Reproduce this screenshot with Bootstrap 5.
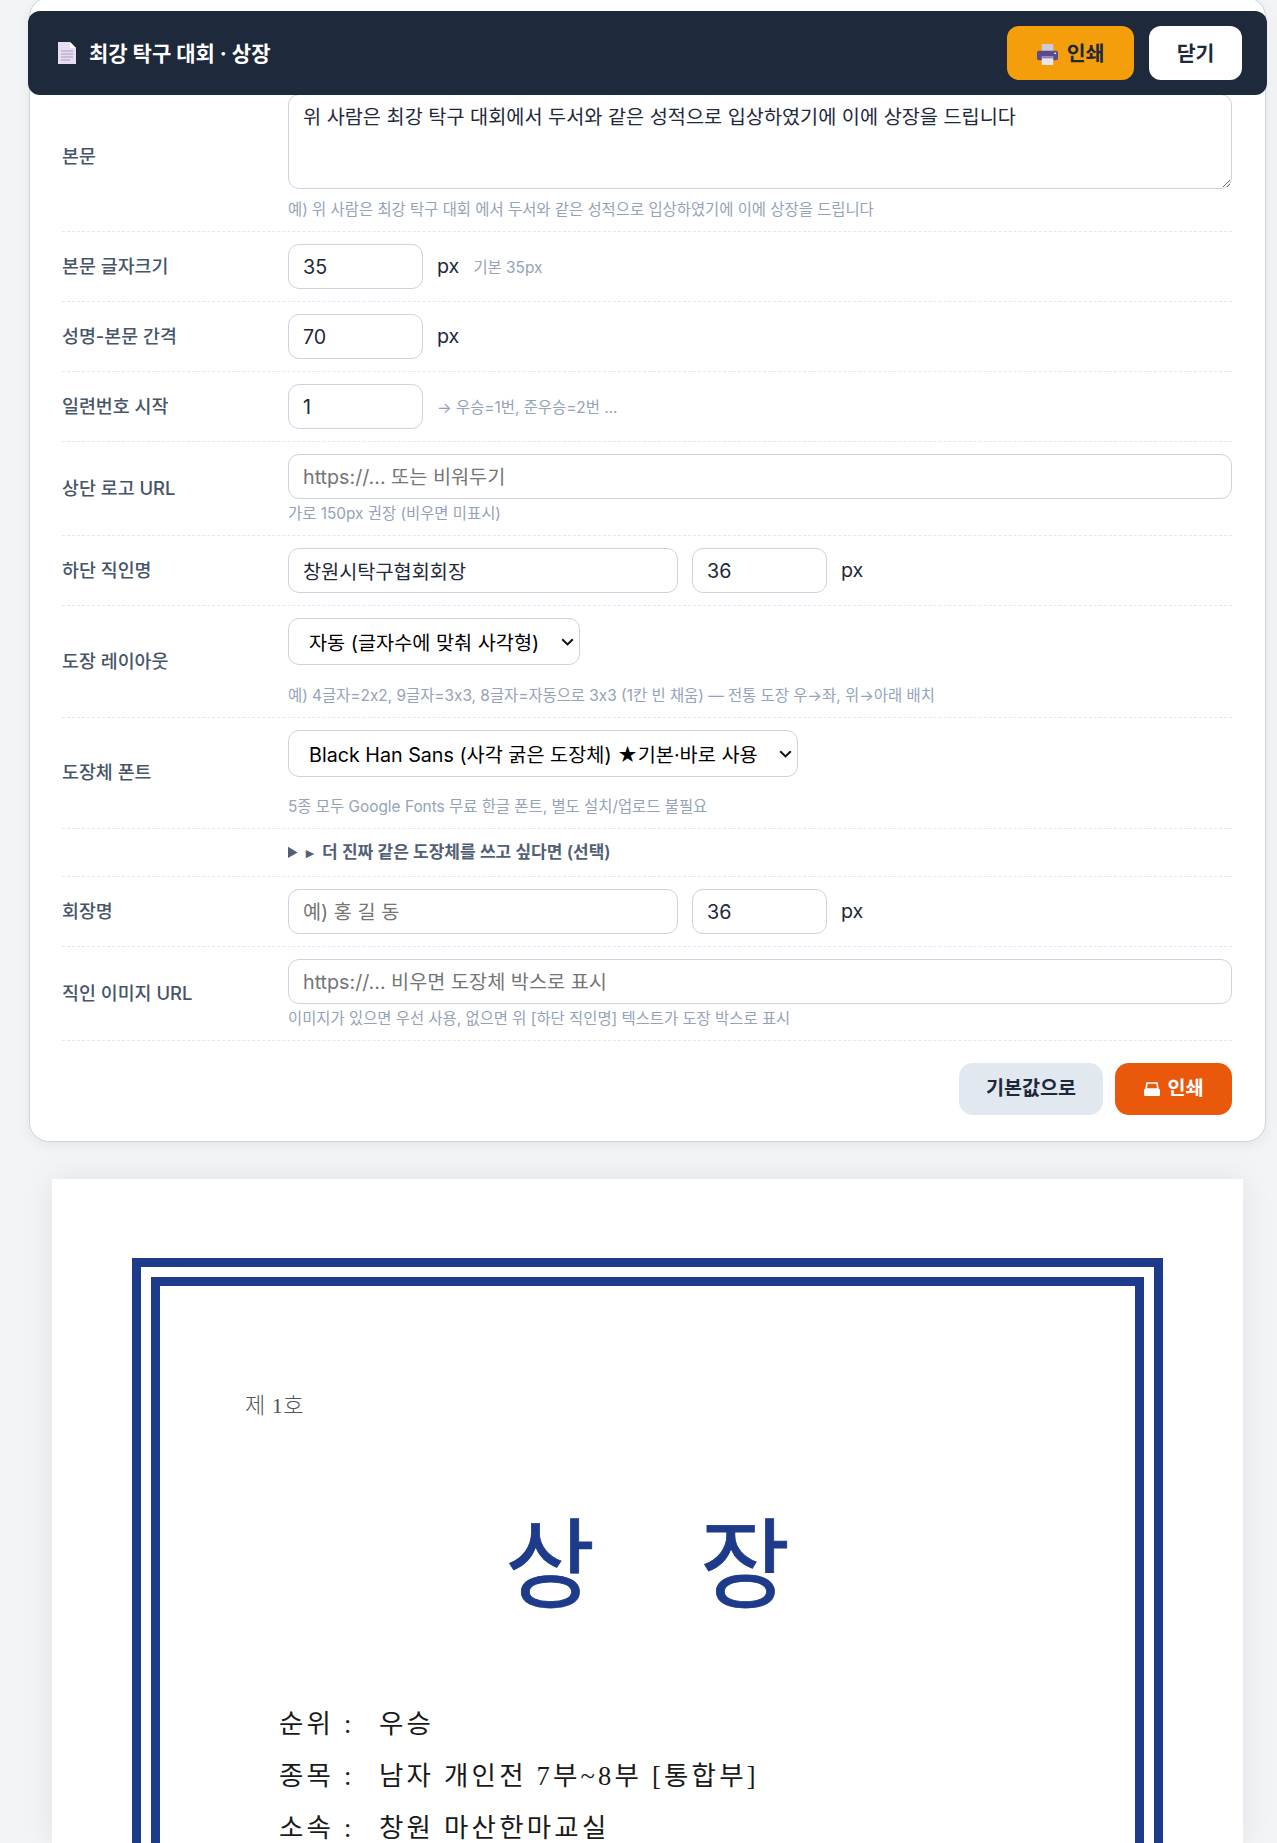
<!doctype html>
<html lang="ko"><head><meta charset="utf-8">
<link href="https://cdn.jsdelivr.net/npm/bootstrap@5.3.0/dist/css/bootstrap.min.css" rel="stylesheet">
<style>
html,body{height:1843px;overflow:hidden}
body{background:#f3f4f6;font-family:Inter,"Noto Sans CJK KR",sans-serif;color:#1e293b;position:relative}
.stage{padding:0 11px 0 29px}
.topbar{background:#1e293b;border-radius:12px;height:84px;position:absolute;top:11px;left:28px;width:1239px;z-index:10;padding:0 25px 0 29px}
.topbar h1{font-size:21px;font-weight:700;color:#fff;margin:0;padding-top:2px}
.topbtn{height:54px;border-radius:12px;font-size:20.5px;font-weight:700;color:#1e293b;border:0;padding:2px 0 0;display:flex;align-items:center;justify-content:center;gap:9px}
.topbtn-print{width:127px;background:#f59e0b}
.topbtn-close{width:93px;background:#fff}
.topgap{gap:15px}
.formcard{background:#fff;border:1px solid #cbd5e1;border-radius:20px;margin-top:-3px;padding:84px 33px 26px 32px;box-shadow:0 4px 14px rgba(15,23,42,.06);height:1145px}
.frow{display:flex;align-items:center;padding:12px 0;border-bottom:1px dashed #e2e8f0}
.flabel{flex:0 0 226px;font-size:18.4px;font-weight:500;color:#475569}
.fbody{flex:1 1 auto;min-width:0}
.ctlgap{gap:14px}
.fctl.form-control{height:45px;border:1px solid #cbd5e1;border-radius:11px;font-size:19.7px;padding:0 14px;color:#1e293b;box-shadow:none}
.fctl.form-control::placeholder{color:#757575}
textarea.fctl.form-control{height:95px;padding:8px 14px 4px;display:block;resize:vertical}
.w-num{width:135px;flex:0 0 135px}
.w-name{width:390px;flex:0 0 390px}
.unit{font-size:19.7px;color:#1e293b;padding-top:1px}
.fhint{font-size:15.4px;line-height:20px;color:#94a3b8}
.fhint-in{margin-top:2px}
.fhint-blk{margin-bottom:-1px}
.mt-a{margin-top:5px}.mt-b{margin-top:11px}.mt-c{margin-top:21px}.mt-d{margin-top:20px}
.natsel{display:block;height:47px;border:1px solid #cbd5e1;border-radius:11px;font-size:19.7px;padding:4px 30px 0 20px;color:#000;font-family:inherit;appearance:none;-webkit-appearance:none;background:#fff url("data:image/svg+xml,%3Csvg xmlns='http://www.w3.org/2000/svg' viewBox='0 0 13 8'%3E%3Cpath d='M1.2 1.2 6.5 6.4 11.8 1.2' fill='none' stroke='%23111' stroke-width='2'/%3E%3C/svg%3E") no-repeat right 5px center/13px 8px}
.sel-a{width:292px}
.sel-b{width:510px}
.sumline{font-size:17px;font-weight:600;color:#526077;line-height:22px;cursor:pointer}
.tri{font-size:15px;margin-right:8px}
.actbtn{height:52px;border-radius:14px;border:0;font-size:19.6px;font-weight:700;display:flex;align-items:center;justify-content:center;gap:6px}
.act-reset{width:144px;background:#e2e8f0;color:#1e293b}
.act-print{width:117px;background:#ea580c;color:#fff}
.acts{margin-top:22px;gap:12px}
.paper{background:#fff;margin:37px 23px 0 23px;height:664px;overflow:hidden;padding:79px 80px 0 80px;box-shadow:0 0 30px rgba(15,23,42,.08)}
.frame-out{border:9px solid #1e3a8a;padding:10px;height:900px}
.frame-in{border:9px solid #1e3a8a;height:800px;padding:101px 85px 0;font-family:"Liberation Serif","Noto Sans CJK KR",serif}
.serial{font-size:22px;line-height:38px;color:#555;font-weight:300;letter-spacing:.5px}
.ttl{font-size:98px;line-height:130px;color:#1e3a8a;text-align:center;margin:77px -85px 0;letter-spacing:.41em;padding-left:.41em;font-weight:400;-webkit-text-stroke:.8px #1e3a8a}
.plist{margin:66px 0 0 34px}
.pline{display:flex;font-size:26.5px;line-height:52px;color:#1a1a1a;letter-spacing:3.2px}
.pkey{flex:0 0 100px}
</style></head><body>
<div class="topbar d-flex align-items-center justify-content-between">
  <div class="d-flex align-items-center gap-2">
    <svg width="20" height="24" viewBox="0 0 20 24" class="me-1"><path d="M1 1h12l6 6v16H1z" fill="#e6ddf0"/><path d="M13 1l6 6h-6z" fill="#fff"/><path d="M4 10h12M4 13h12M4 16h12M4 19h9" stroke="#a99cb8" stroke-width="1"/></svg>
    <h1>최강 탁구 대회 · 상장</h1>
  </div>
  <div class="d-flex topgap">
    <button class="topbtn topbtn-print" type="button"><svg width="21" height="21" viewBox="0 0 22 22"><rect x="5" y="0" width="12" height="8" rx="1" fill="#cfc9dc"/><rect x="0" y="7" width="22" height="10" rx="2" fill="#5b4b8a"/><rect x="18" y="9" width="2" height="1.5" fill="#e6e0f0"/><rect x="5" y="13" width="12" height="9" fill="#e8e4f0"/><rect x="5" y="13" width="12" height="2" fill="#8a7fa8"/></svg><span>인쇄</span></button>
    <button class="topbtn topbtn-close" type="button">닫기</button>
  </div>
</div>
<div class="stage">
<div class="formcard">
  <div class="frow">
    <div class="flabel">본문</div>
    <div class="fbody">
      <textarea class="form-control fctl">위 사람은 최강 탁구 대회에서 두서와 같은 성적으로 입상하였기에 이에 상장을 드립니다</textarea>
      <div class="fhint fhint-blk mt-b">예) 위 사람은 최강 탁구 대회 에서 두서와 같은 성적으로 입상하였기에 이에 상장을 드립니다</div>
    </div>
  </div>
  <div class="frow">
    <div class="flabel">본문 글자크기</div>
    <div class="fbody d-flex align-items-center ctlgap"><input class="form-control fctl w-num" value="35"><span class="unit">px</span><span class="fhint fhint-in">기본 35px</span></div>
  </div>
  <div class="frow">
    <div class="flabel">성명-본문 간격</div>
    <div class="fbody d-flex align-items-center ctlgap"><input class="form-control fctl w-num" value="70"><span class="unit">px</span></div>
  </div>
  <div class="frow">
    <div class="flabel">일련번호 시작</div>
    <div class="fbody d-flex align-items-center ctlgap"><input class="form-control fctl w-num" value="1"><span class="fhint fhint-in">→ 우승=1번, 준우승=2번 ...</span></div>
  </div>
  <div class="frow">
    <div class="flabel">상단 로고 URL</div>
    <div class="fbody"><input class="form-control fctl" placeholder="https://... 또는 비워두기"><div class="fhint fhint-blk mt-a">가로 150px 권장 (비우면 미표시)</div></div>
  </div>
  <div class="frow">
    <div class="flabel">하단 직인명</div>
    <div class="fbody d-flex align-items-center ctlgap"><input class="form-control fctl w-name" value="창원시탁구협회회장"><input class="form-control fctl w-num" value="36"><span class="unit">px</span></div>
  </div>
  <div class="frow">
    <div class="flabel">도장 레이아웃</div>
    <div class="fbody"><select class="natsel sel-a"><option>자동 (글자수에 맞춰 사각형)</option></select><div class="fhint fhint-blk mt-c">예) 4글자=2x2, 9글자=3x3, 8글자=자동으로 3x3 (1칸 빈 채움) — 전통 도장 우→좌, 위→아래 배치</div></div>
  </div>
  <div class="frow">
    <div class="flabel">도장체 폰트</div>
    <div class="fbody"><select class="natsel sel-b"><option>Black Han Sans (사각 굵은 도장체) ★기본·바로 사용</option></select><div class="fhint fhint-blk mt-d">5종 모두 Google Fonts 무료 한글 폰트, 별도 설치/업로드 불필요</div></div>
  </div>
  <div class="frow">
    <div class="flabel"></div>
    <div class="fbody"><details><summary class="sumline"><span class="tri">▸</span>더 진짜 같은 도장체를 쓰고 싶다면 (선택)</summary></details></div>
  </div>
  <div class="frow">
    <div class="flabel">회장명</div>
    <div class="fbody d-flex align-items-center ctlgap"><input class="form-control fctl w-name" placeholder="예) 홍 길 동"><input class="form-control fctl w-num" value="36"><span class="unit">px</span></div>
  </div>
  <div class="frow">
    <div class="flabel">직인 이미지 URL</div>
    <div class="fbody"><input class="form-control fctl" placeholder="https://... 비우면 도장체 박스로 표시"><div class="fhint fhint-blk mt-a">이미지가 있으면 우선 사용, 없으면 위 [하단 직인명] 텍스트가 도장 박스로 표시</div></div>
  </div>
  <div class="acts d-flex justify-content-end">
    <button class="actbtn act-reset" type="button">기본값으로</button>
    <button class="actbtn act-print" type="button"><svg width="18" height="15" viewBox="0 0 18 15"><path d="M4 1h10l1 6H3z" fill="none" stroke="#fff" stroke-width="1.6"/><rect x="1" y="7" width="16" height="7" rx="1" fill="#fff"/></svg><span>인쇄</span></button>
  </div>
</div>
<div class="paper">
  <div class="frame-out"><div class="frame-in">
    <div class="serial">제 1호</div>
    <div class="ttl">상 장</div>
    <div class="plist">
      <div class="pline"><span class="pkey">순위 :</span><span>우승</span></div>
      <div class="pline"><span class="pkey">종목 :</span><span>남자 개인전 7부~8부 [통합부]</span></div>
      <div class="pline"><span class="pkey">소속 :</span><span>창원 마산한마교실</span></div>
    </div>
  </div></div>
</div>
</div>
</body></html>
